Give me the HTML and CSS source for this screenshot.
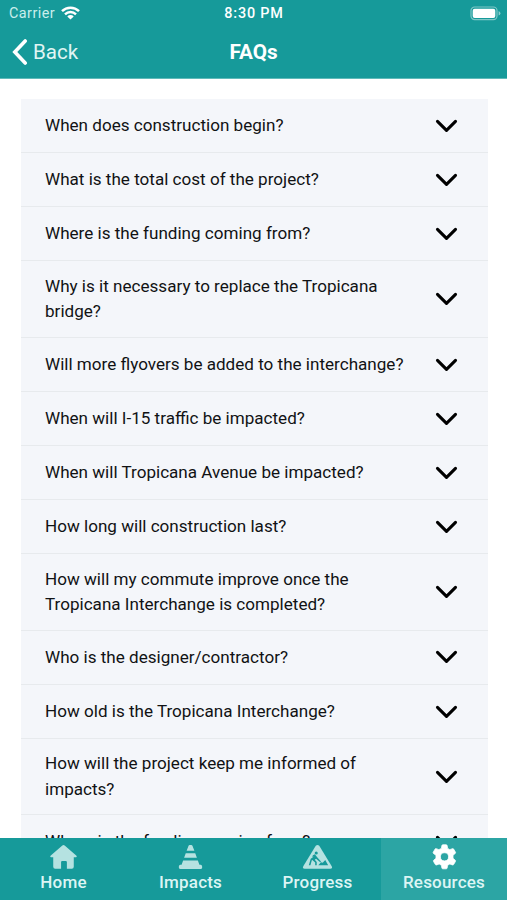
FILE: index.html
```html
<!DOCTYPE html>
<html lang="en">
<head>
<meta charset="utf-8">
<meta name="viewport" content="width=device-width, initial-scale=1">
<title>FAQs</title>
<link rel="stylesheet" href="styles.css">
</head>
<body>
<svg width="0" height="0" class="defs">
  <symbol id="chevron" viewBox="0 0 24 16"><path d="M2.600 3.200 12 12.600 21.400 3.200" fill="none" stroke="#000" stroke-width="3.200" stroke-linecap="round" stroke-linejoin="round"/></symbol>
</svg>
<div class="app">
  <header class="header">
    <div class="status">
      <div class="carrier">Carrier
        <svg class="wifi" viewBox="0 0 19 14"><g fill="none" stroke="#fff" stroke-width="2.5"><path d="M1 5.1A12.2 12.2 0 0 1 18 5.1"/><path d="M4 8.3A8 8 0 0 1 15 8.3"/></g><path d="M9.5 13.6 6.3 10.4A4.6 4.6 0 0 1 12.7 10.4Z" fill="#fff"/></svg>
      </div>
      <div class="time">8:30 PM</div>
      <svg class="battery" viewBox="0 0 31 15"><rect x="1" y="1" width="26" height="12.6" rx="3.6" fill="none" stroke="#fff" stroke-opacity=".45" stroke-width="1.2"/><rect x="2.7" y="2.7" width="22.6" height="9.2" rx="2" fill="#fff"/><path d="M28.6 5v4.6q1.800-.7 1.800-2.300T28.600 5Z" fill="#fff" fill-opacity=".5"/></svg>
    </div>
    <div class="navbar">
      <div class="back"><svg class="back-icon" viewBox="0 0 16 26"><path d="M13.200 2 2.800 13l10.400 11" fill="none" stroke="#fff" stroke-width="3.600" stroke-linecap="round" stroke-linejoin="miter"/></svg><span>Back</span></div>
      <h1 class="title">FAQs</h1>
      <div></div>
    </div>
  </header>
  <main class="content">
    <ul class="faq">
      <li><span>When does construction begin?</span><svg><use href="#chevron"/></svg></li>
      <li><span>What is the total cost of the project?</span><svg><use href="#chevron"/></svg></li>
      <li><span>Where is the funding coming from?</span><svg><use href="#chevron"/></svg></li>
      <li><span>Why is it necessary to replace the Tropicana bridge?</span><svg><use href="#chevron"/></svg></li>
      <li><span>Will more flyovers be added to the interchange?</span><svg><use href="#chevron"/></svg></li>
      <li><span>When will I-15 traffic be impacted?</span><svg><use href="#chevron"/></svg></li>
      <li><span>When will Tropicana Avenue be impacted?</span><svg><use href="#chevron"/></svg></li>
      <li><span>How long will construction last?</span><svg><use href="#chevron"/></svg></li>
      <li><span>How will my commute improve once the Tropicana Interchange is completed?</span><svg><use href="#chevron"/></svg></li>
      <li><span>Who is the designer/contractor?</span><svg><use href="#chevron"/></svg></li>
      <li><span>How old is the Tropicana Interchange?</span><svg><use href="#chevron"/></svg></li>
      <li><span>How will the project keep me informed of impacts?</span><svg><use href="#chevron"/></svg></li>
      <li><span>Where is the funding coming from?</span><svg><use href="#chevron"/></svg></li>
    </ul>
  </main>
  <nav class="tabs">
    <div class="tab">
      <svg viewBox="0 0 32 26"><path d="M14.800 1.100q1.200-1 2.400 0L29.400 11.700q1 1.600-.8 1.600H26.600V23q0 2-2 2H19.500V18.200q0-1.200-1.200-1.200H14.700q-1.200 0-1.200 1.200V25H7.400q-2 0-2-2V13.300H3.400q-1.800 0-.8-1.600Z" fill="currentColor"/></svg>
      <span>Home</span>
    </div>
    <div class="tab">
      <svg viewBox="0 0 32 26"><path d="M14 1.400q.3-.9 1.200-.9h1.600q.9 0 1.200.9l2 5.200h-8ZM11.100 9h9.800l1.700 4.700H9.400ZM8.400 16.500h15.200l1.600 4.600h1.500q1.400.3 1.400 2.300t-1.400 1.900H5.300q-1.400 0-1.400-1.900t1.400-2.300h1.500Z" fill="currentColor"/></svg>
      <span>Impacts</span>
    </div>
    <div class="tab">
      <svg viewBox="0 0 32 26"><path d="M14.200 1.500q1.800-2 3.600 0L30.700 22.500q1 2.500-1.600 2.700H2.900Q.3 25 1.300 22.500Z" fill="currentColor"/><g class="cut"><circle cx="14.700" cy="8.800" r="1.600"/><path d="m11.300 11.200 2-1 2.600 3.200 3.700 4.200-.8.700-4.300-3.500-1.300 1 2 2.300v3.300h-1.600v-2.600l-3.300-3-1.600 5.600H7l2-6.600 1.500-1 1.500-1.400-1.600.4ZM16.800 21.400l2.800-2.900 1.800.5 2.600-3 3 5.400Z"/></g></svg>
      <span>Progress</span>
    </div>
    <div class="tab active">
      <svg viewBox="0 0 32 26"><path fill="currentColor" stroke="currentColor" stroke-width=".8" stroke-linejoin="round" fill-rule="evenodd" d="M13.300 1.200q.1-.8 1-.8h3.400q.9 0 1 .8l.5 2.900 2.300 1.300 2.700-1q.8-.3 1.200.4l1.900 3.200q.4.800-.2 1.300l-2.300 1.900v3.200l2.300 1.900q.6.500.2 1.300l-1.900 3.200q-.4.700-1.200.4l-2.700-1-2.300 1.300-.5 2.900q-.1.800-1 .8h-3.400q-.9 0-1-.8l-.5-2.900-2.300-1.300-2.700 1q-.8.300-1.200-.4l-1.900-3.200q-.4-.8.200-1.300l2.300-1.900v-3.200L4.600 9.300Q4 8.800 4.400 8l1.900-3.200q.4-.7 1.200-.4l2.700 1 2.600-1.300ZM16 8.600a4.200 4.200 0 1 0 0 8.400 4.200 4.200 0 0 0 0-8.400Z"/></svg>
      <span>Resources</span>
    </div>
  </nav>
</div>
</body>
</html>
```

FILE: styles.css
```css
* { box-sizing: border-box; }
body {
  margin: 0;
  font-family: Roboto, "Liberation Sans", sans-serif;
  background: #fff;
}
.defs { display: block; }
.app {
  display: flex;
  flex-direction: column;
  height: 100vh;
  overflow: hidden;
}
.header {
  flex: 0 0 79px;
  background: #169a9a;
  border-bottom: 1px solid #5fbab9;
  color: #fff;
}
.status, .navbar {
  display: grid;
  grid-template-columns: 1fr auto 1fr;
  align-items: center;
}
.status {
  height: 27px;
  padding: 0 6px 0 9px;
  font-size: 14.4px;
}
.carrier {
  display: flex;
  align-items: center;
  gap: 6px;
  color: #c9eeec;
  letter-spacing: .45px;
}
.wifi { width: 19px; height: 14px; margin-top: -2px; }
.time { font-weight: 500; letter-spacing: .8px; margin-left: -2px; }
.battery { width: 31px; height: 15px; justify-self: end; }
.navbar { height: 50px; padding: 0 12px; }
.back {
  display: flex;
  align-items: center;
  gap: 5px;
  font-size: 20.6px;
  color: #e0f5f4;
}
.back-icon { width: 16px; height: 26px; }
.title { margin: 0; font-size: 20.700px; font-weight: 700; }
.content {
  flex: 1;
  min-height: 0;
  overflow: hidden;
  padding: 20px 19px 0 21px;
}
.faq { margin: 0; padding: 0; list-style: none; background: #f4f6fa; }
.faq li {
  display: flex;
  align-items: center;
  justify-content: space-between;
  min-height: 54.15px;
  padding: 12.3px 30px 11.800px 24px;
  border-bottom: 1px solid #e7eaed;
  font-size: 17.080px;
  line-height: 25.600px;
  color: #111214;
}
.faq span { width: 363px; }
.faq svg { width: 23px; height: 16px; flex: none; }
.tabs {
  flex: 0 0 62px;
  display: grid;
  grid-template-columns: 127fr 127fr 127fr 126fr;
  background: #169a9a;
}
.tab {
  display: flex;
  flex-direction: column;
  align-items: center;
  padding-top: 6px;
  color: #b5e2e1;
}
.tab svg { width: 31px; height: 26px; }
.tab span {
  color: #dcf5f4;
  font-size: 17px;
  font-weight: 500;
  line-height: 24px;
  letter-spacing: .2px;
}
.tab.active { background: #2ca5a4; color: #fff; }
.cut { fill: #169a9a; }
```
